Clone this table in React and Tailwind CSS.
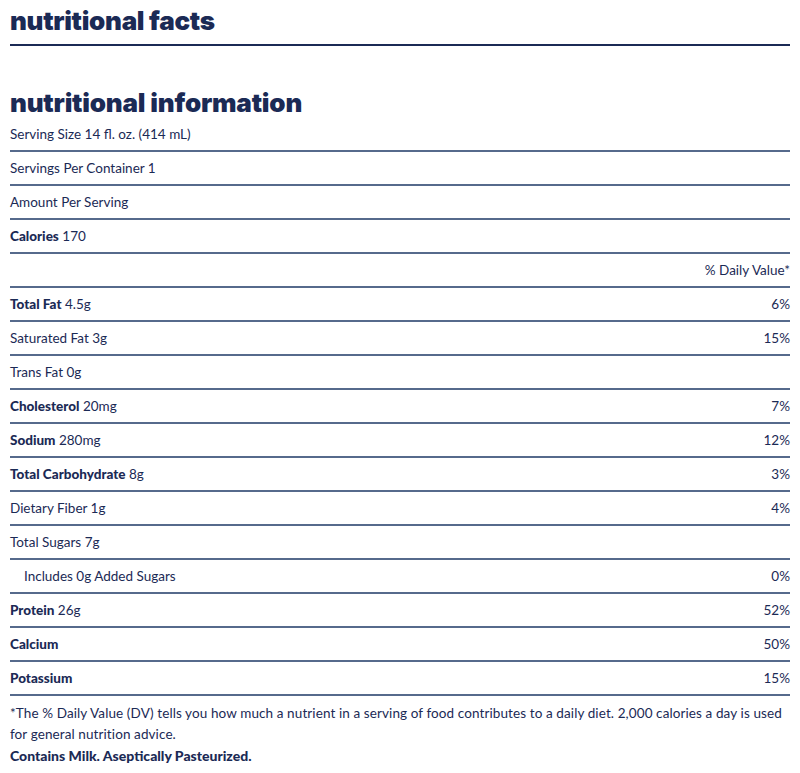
import React from "react";

const rows = [
  { b: "Servings Per Container 1" },
  { b: "Amount Per Serving" },
  { bold: "Calories", b: " 170" },
  { b: "", v: "% Daily Value*" },
  { bold: "Total Fat", b: " 4.5g", v: "6%" },
  { b: "Saturated Fat 3g", v: "15%" },
  { b: "Trans Fat 0g" },
  { bold: "Cholesterol", b: " 20mg", v: "7%" },
  { bold: "Sodium", b: " 280mg", v: "12%" },
  { bold: "Total Carbohydrate", b: " 8g", v: "3%" },
  { b: "Dietary Fiber 1g", v: "4%" },
  { b: "Total Sugars 7g" },
  { b: "Includes 0g Added Sugars", v: "0%", indent: true },
  { bold: "Protein", b: " 26g", v: "52%" },
  { bold: "Calcium", v: "50%" },
  { bold: "Potassium", v: "15%" },
];

export default function App() {
  return (
    <div
      className="w-[800px] h-[773px] bg-white text-[#1b2a55] pl-[10px] pr-[10px]"
      style={{ fontFamily: "Lato, 'Open Sans', sans-serif" }}
    >
      <h1 className="pt-[6px] text-[26px] leading-[30px] font-black tracking-[-0.3px]" style={{ fontFamily: "Inter, sans-serif" }}>
        nutritional facts
      </h1>
      <div className="mt-[8px] h-[2px] bg-[#1b2a55]" />
      <h2 className="mt-[42px] text-[26px] leading-[30px] font-black tracking-[-0.2px]" style={{ fontFamily: "Inter, sans-serif" }}>
        nutritional information
      </h2>
      <div className="flex items-center h-[32px] text-[13.5px]">Serving Size 14 fl. oz. (414 mL)</div>
      <div className="border-t-2 border-[#566a8c]">
        {rows.map((r, i) => (
          <div
            key={i}
            className="flex justify-between items-center h-[34px] border-b-2 border-[#566a8c] text-[13.5px]"
          >
            <span className={r.indent ? "pl-[14px]" : ""}>
              {r.bold && <span className="font-black">{r.bold}</span>}
              {r.b}
            </span>
            {r.v && <span>{r.v}</span>}
          </div>
        ))}
      </div>
      <p className="mt-[7px] text-[13.5px] leading-[21px] tracking-[0.1px]">
        *The % Daily Value (DV) tells you how much a nutrient in a serving of food contributes to a daily diet. 2,000 calories a day is used for general nutrition advice.
      </p>
      <p className="text-[14px] leading-[21px] font-black">Contains Milk. Aseptically Pasteurized.</p>
    </div>
  );
}
